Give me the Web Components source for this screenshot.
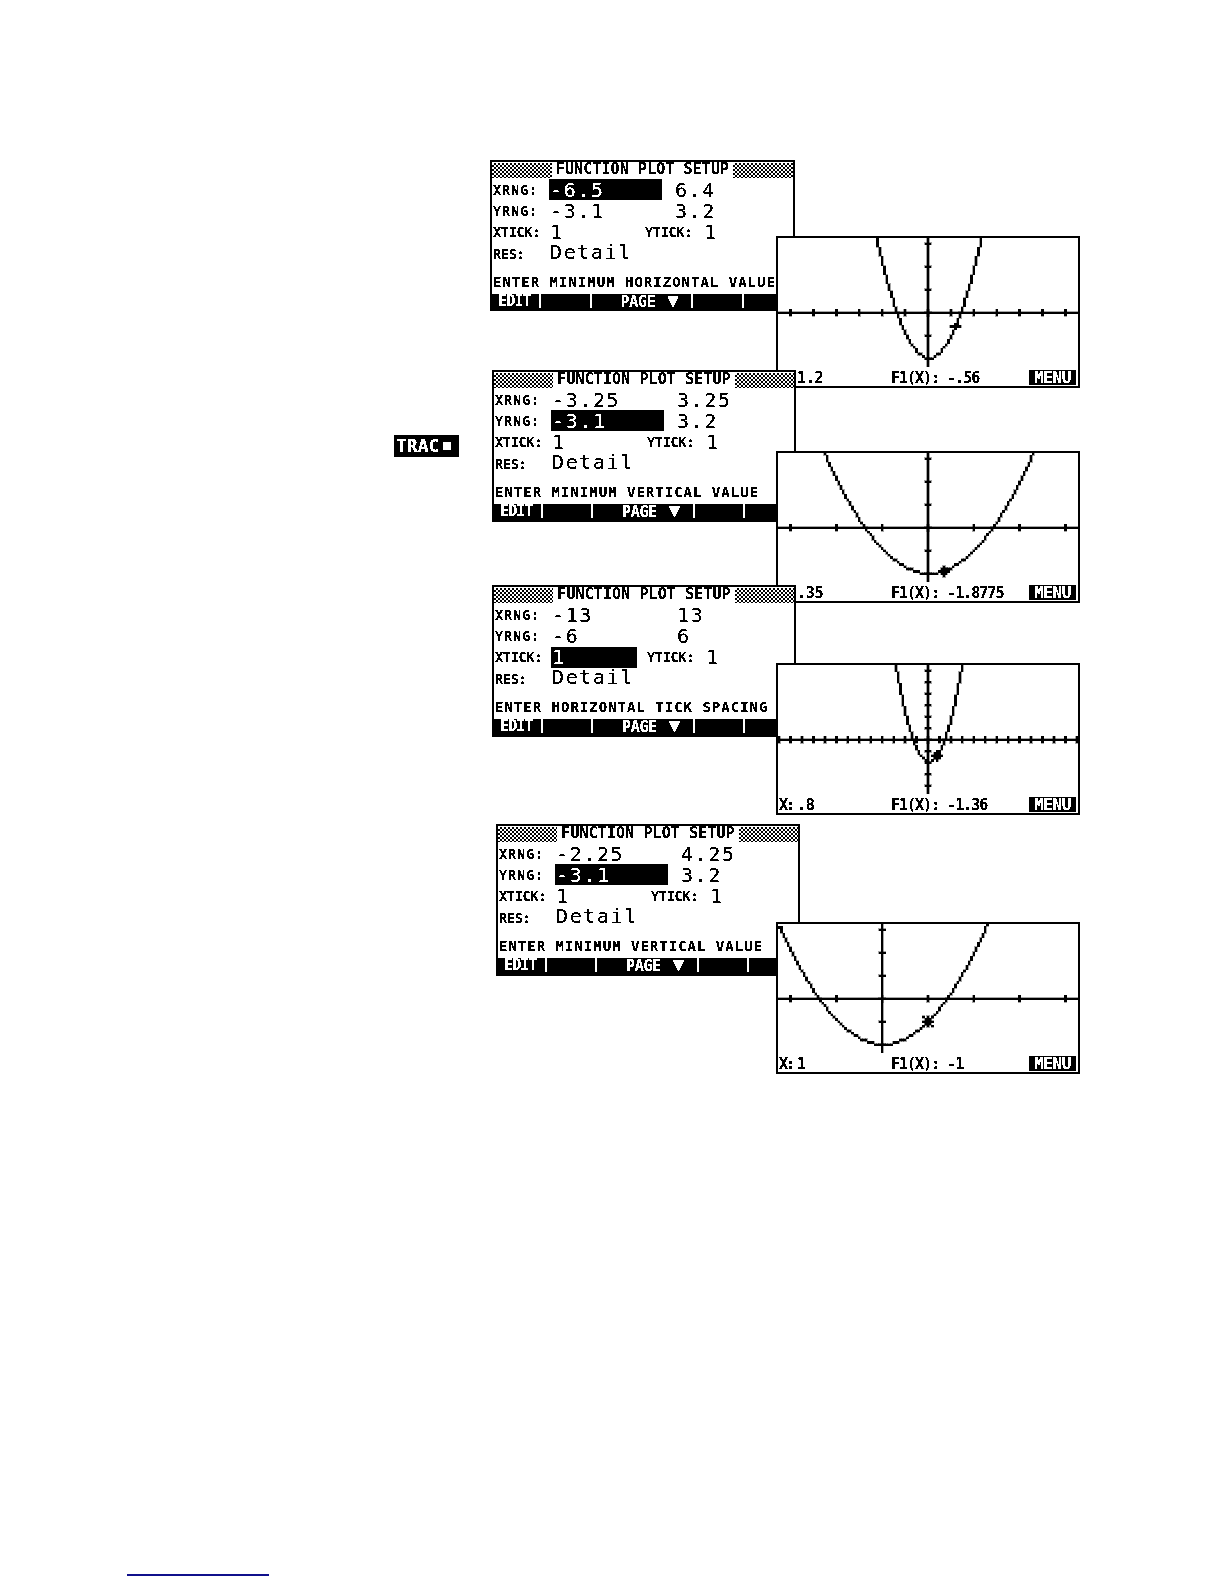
<!DOCTYPE html>
<html>
<head>
<meta charset="utf-8">
<title>Function plot setup</title>
<style>
  html, body { margin: 0; padding: 0; background: #fff; }
</style>
</head>
<body>
<calc-page>
  <setup-screen style="--x:490px;--y:160px;--w:305px;--h:151px" message="ENTER MINIMUM HORIZONTAL VALUE">
    <range-field label="XRNG:" low="-6.5" high="6.4" active></range-field>
    <range-field label="YRNG:" low="-3.1" high="3.2"></range-field>
    <tick-field xtick="1" ytick="1"></tick-field>
    <res-field value="Detail"></res-field>
  </setup-screen>
  <plot-screen style="--x:776px;--y:236px" origin="65" xpix="0.1" ypix="0.1" xstep="10" ystep="10" cursor="1.2" x-label="1.2" f-label="-.56"></plot-screen>

  <setup-screen style="--x:492px;--y:370px" message="ENTER MINIMUM VERTICAL VALUE">
    <range-field label="XRNG:" low="-3.25" high="3.25"></range-field>
    <range-field label="YRNG:" low="-3.1" high="3.2" active></range-field>
    <tick-field xtick="1" ytick="1"></tick-field>
    <res-field value="Detail"></res-field>
  </setup-screen>
  <plot-screen style="--x:776px;--y:451px" origin="65" xpix="0.05" ypix="0.1" xstep="20" ystep="10" cursor="0.35" cursor-style="bold" x-label=".35" f-label="-1.8775"></plot-screen>

  <setup-screen style="--x:492px;--y:585px" message="ENTER HORIZONTAL TICK SPACING">
    <range-field label="XRNG:" low="-13" high="13"></range-field>
    <range-field label="YRNG:" low="-6" high="6"></range-field>
    <tick-field xtick="1" ytick="1" active></tick-field>
    <res-field value="Detail"></res-field>
  </setup-screen>
  <plot-screen style="--x:776px;--y:663px" origin="65" xpix="0.2" ypix="0.2" xstep="5" ystep="5" cursor="0.8" cursor-style="bold" x-label=".8" f-label="-1.36"></plot-screen>

  <setup-screen style="--x:496px;--y:824px" message="ENTER MINIMUM VERTICAL VALUE">
    <range-field label="XRNG:" low="-2.25" high="4.25"></range-field>
    <range-field label="YRNG:" low="-3.1" high="3.2" active></range-field>
    <tick-field xtick="1" ytick="1"></tick-field>
    <res-field value="Detail"></res-field>
  </setup-screen>
  <plot-screen style="--x:776px;--y:922px" origin="45" xpix="0.05" ypix="0.1" xstep="20" ystep="10" cursor="1" cursor-style="star" x-label="1" f-label="-1"></plot-screen>

  <key-label style="--x:394px;--y:435px">TRAC</key-label>
</calc-page>

<script>
  // shared bits: every shadow root gets the same alpha threshold so text looks like LCD pixels
  const CRISP = `<svg width="0" height="0" style="position:absolute"><filter id="crisp" x="-10%" y="-30%" width="120%" height="160%"><feComponentTransfer><feFuncA type="discrete" tableValues="0 0 1 1 1"/></feComponentTransfer></filter></svg>`;
  const MONO = `"DejaVu Sans Mono", "Liberation Mono", monospace`;

  class CalcPage extends HTMLElement {
    constructor() {
      super();
      this.attachShadow({mode: 'open'}).innerHTML = `
        <style>
          :host { display: block; position: relative; width: 1224px; height: 1584px; overflow: hidden; background: #fff; }
          .rule { width: 142px; height: 2px; margin: 1574px 0 0 127px; background: #10108c; }
        </style>
        <slot></slot>
        <div class="rule"></div>`;
    }
  }

  class SetupScreen extends HTMLElement {
    constructor() {
      super();
      this.attachShadow({mode: 'open'}).innerHTML = `
        ${CRISP}
        <style>
          :host {
            display: block; position: absolute; left: var(--x); top: var(--y);
            width: var(--w, 304px); height: var(--h, 152px); box-sizing: border-box;
            border: 2px solid #000; border-bottom: 0; background: #fff; color: #000;
            font-family: ${MONO};
          }
          .wrap { display: flex; flex-direction: column; height: 100%; }
          .title { display: flex; align-items: center; height: 17px; gap: 4px; }
          .band { flex: 1; height: 15px; background: conic-gradient(#000 25%, #fff 0 50%, #000 0 75%, #fff 0) 0 0 / 4px 4px; }
          .title span { font-size: 15px; line-height: 15px; font-weight: bold; letter-spacing: .1px; padding-bottom: 2px; white-space: pre; filter: url(#crisp); }
          .fields { display: flex; flex-direction: column; height: 86px; }
          .msg { margin: 7px 0 2px; padding-left: 1px; height: 20px; font-size: 14px; line-height: 20px; font-weight: bold; letter-spacing: 1px; white-space: pre; filter: url(#crisp); }
          .keys { flex: 1; display: grid; grid-template-columns: repeat(6, 1fr); align-items: start; margin: 0 -2px; background: #000; }
        </style>
        <div class="wrap">
          <div class="title"><div class="band"></div><span>FUNCTION PLOT SETUP</span><div class="band"></div></div>
          <div class="fields"><slot></slot></div>
          <div class="msg">${this.getAttribute('message') || ''}</div>
          <div class="keys">
            <soft-key>EDIT</soft-key><soft-key></soft-key>
            <soft-key style="grid-column: span 2; letter-spacing: -.3px; padding-left: 16px">PAGE <b style="font-size:19px;line-height:14px;margin-left:3px">▼</b></soft-key>
            <soft-key></soft-key><soft-key></soft-key>
          </div>
        </div>`;
    }
  }

  class SoftKey extends HTMLElement {
    constructor() {
      super();
      this.attachShadow({mode: 'open'}).innerHTML = `
        ${CRISP}
        <style>
          :host {
            display: flex; align-items: center; justify-content: center;
            box-sizing: border-box; border-right: 2px solid #fff;
            height: 14px; color: #fff; font-size: 15px; line-height: 14px; font-weight: bold; letter-spacing: -1px;
            font-family: ${MONO};
          }
          span { filter: url(#crisp); }
        </style>
        <span><slot></slot></span>`;
    }
  }

  // the four columns line both field kinds up: label, first value, YTICK label, second value
  const FIELD_CSS = `
    :host {
      display: grid; grid-template-columns: 57px 96px 29px 29px 1fr; align-items: center;
      height: 21.3px; font-family: ${MONO}; color: #000;
    }
    .label { font-size: 13.5px; line-height: 16px; font-weight: bold; letter-spacing: .9px; padding-left: 1px; white-space: pre; filter: url(#crisp); }
    .short { letter-spacing: -.3px; }
    .value { font-size: 20px; line-height: 21px; height: 21px; letter-spacing: 1.6px; padding-left: 1px; white-space: pre; }
    .value span { filter: url(#crisp); display: block; }
    .on { background: #000; color: #fff; }
  `;

  class RangeField extends HTMLElement {
    constructor() {
      super();
      const on = this.hasAttribute('active') ? 'on' : '';
      this.attachShadow({mode: 'open'}).innerHTML = `
        ${CRISP}
        <style>${FIELD_CSS}
          .value span { line-height: 19px; padding-top: 2px; }
          .low { grid-column: 2 / 4; width: 112px; }
          .high { grid-column: 4 / 6; }
        </style>
        <div class="label">${this.getAttribute('label')}</div>
        <div class="value low ${on}"><span>${this.getAttribute('low')}</span></div>
        <div class="value high"><span>${this.getAttribute('high')}</span></div>`;
    }
  }

  class TickField extends HTMLElement {
    constructor() {
      super();
      const on = this.hasAttribute('active') ? 'on' : '';
      this.attachShadow({mode: 'open'}).innerHTML = `
        ${CRISP}
        <style>${FIELD_CSS}
          .x { width: 85px; }
          .ylabel { grid-column: 3 / 5; margin-left: -1px; }
          .y { grid-column: 5; }
        </style>
        <div class="label short">XTICK:</div>
        <div class="value x ${on}"><span>${this.getAttribute('xtick')}</span></div>
        <div class="label short ylabel">YTICK:</div>
        <div class="value y"><span>${this.getAttribute('ytick')}</span></div>`;
    }
  }

  class ResField extends HTMLElement {
    constructor() {
      super();
      this.attachShadow({mode: 'open'}).innerHTML = `
        ${CRISP}
        <style>${FIELD_CSS}
          .v { grid-column: 2 / 6; line-height: 19px; }
        </style>
        <div class="label short">RES:</div>
        <div class="value v"><span>${this.getAttribute('value')}</span></div>`;
    }
  }

  class PlotScreen extends HTMLElement {
    constructor() {
      super();
      this.attachShadow({mode: 'open'});
    }

    connectedCallback() {
      const origin = +this.getAttribute('origin');
      const xpix = +this.getAttribute('xpix');
      const ypix = +this.getAttribute('ypix');
      const xstep = +this.getAttribute('xstep');
      const ystep = +this.getAttribute('ystep');
      const cursor = +this.getAttribute('cursor');
      const cursorStyle = this.getAttribute('cursor-style') || 'thin';
      const axisY = 32;
      let px = '';
      const dot = (x, y, w = 1, h = 1) => { px += `<rect x="${x}" y="${y}" width="${w}" height="${h}"/>`; };

      // axes and tick marks, one screen pixel at a time
      dot(0, axisY, 131, 1);
      dot(origin, 0, 1, 56);
      for (let x = origin % xstep; x < 131; x += xstep) dot(x, axisY - 1, 1, 3);
      for (let y = axisY % ystep; y < 56; y += ystep) dot(origin - 1, y, 3, 1);

      // y = x^2 - 2
      const f = x => x * x - 2;
      const row = c => Math.round(axisY - f((c - origin) * xpix) / ypix);
      let prev = row(0);
      for (let c = 0; c < 131; c++) {
        const r = row(c);
        const top = Math.min(prev, r), bot = Math.max(prev, r);
        if (bot >= 0 && top < 57) {
          const from = Math.max(top, 0);
          dot(c, from, 1, Math.max(bot - from, 1));
        }
        prev = r;
      }

      const cx = Math.round(origin + cursor / xpix);
      const cy = row(cx);
      if (cursorStyle === 'thin') {
        dot(cx - 2, cy, 5, 1);
        dot(cx, cy - 1, 1, 3);
      } else {
        dot(cx - 2, cy, 5, 1);
        dot(cx, cy - 2, 1, 5);
        dot(cx - 1, cy - 1, 3, 3);
      }
      if (cursorStyle === 'star') {
        dot(cx - 2, cy - 2); dot(cx + 2, cy - 2); dot(cx - 2, cy + 2); dot(cx + 2, cy + 2);
      }

      this.shadowRoot.innerHTML = `
        ${CRISP}
        <style>
          :host {
            display: block; position: absolute; left: var(--x); top: var(--y);
            width: 304px; height: 152px; box-sizing: border-box;
            border: 2px solid #000; background: #fff; color: #000;
            font-family: ${MONO};
          }
          svg.plot { display: block; width: 300px; height: 131px; }
          .status { display: flex; align-items: center; height: 17px; font-size: 15px; font-weight: bold; letter-spacing: -1px; }
          .xv { width: 113px; padding-left: 1px; box-sizing: border-box; white-space: pre; }
          .xv i { font-style: normal; letter-spacing: -2px; margin-right: 4px; }
          .xv em { font-style: normal; letter-spacing: -.3px; }
          .fv { flex: 1; white-space: pre; }
          .status span { filter: url(#crisp); }
          .menu { width: 47px; height: 15px; margin-right: 2px; background: #000; color: #fff; text-align: center; font-size: 16px; line-height: 15px; letter-spacing: -.4px; }
        </style>
        <svg class="plot" viewBox="0 0 131 57" preserveAspectRatio="none" shape-rendering="crispEdges" fill="#000" stroke="#000" stroke-width=".15">${px}</svg>
        <div class="status">
          <div class="xv"><span><i>X:</i><em>${this.getAttribute('x-label')}</em></span></div>
          <div class="fv"><span>F1(X): ${this.getAttribute('f-label')}</span></div>
          <div class="menu"><span>MENU</span></div>
        </div>`;
    }
  }

  class KeyLabel extends HTMLElement {
    constructor() {
      super();
      this.attachShadow({mode: 'open'}).innerHTML = `
        ${CRISP}
        <style>
          :host {
            display: flex; position: absolute; left: var(--x); top: var(--y); align-items: center;
            width: 65px; height: 22px; box-sizing: border-box; padding-left: 2px; gap: 4px;
            background: #000; color: #fff; font-family: ${MONO};
            font-size: 18px; line-height: 20px; font-weight: bold; letter-spacing: 0;
          }
          span { filter: url(#crisp); }
          i { width: 8px; height: 8px; background: #fff; }
        </style>
        <span><slot></slot></span><i></i>`;
    }
  }

  customElements.define('soft-key', SoftKey);
  customElements.define('range-field', RangeField);
  customElements.define('tick-field', TickField);
  customElements.define('res-field', ResField);
  customElements.define('setup-screen', SetupScreen);
  customElements.define('plot-screen', PlotScreen);
  customElements.define('key-label', KeyLabel);
  customElements.define('calc-page', CalcPage);
</script>
</body>
</html>
